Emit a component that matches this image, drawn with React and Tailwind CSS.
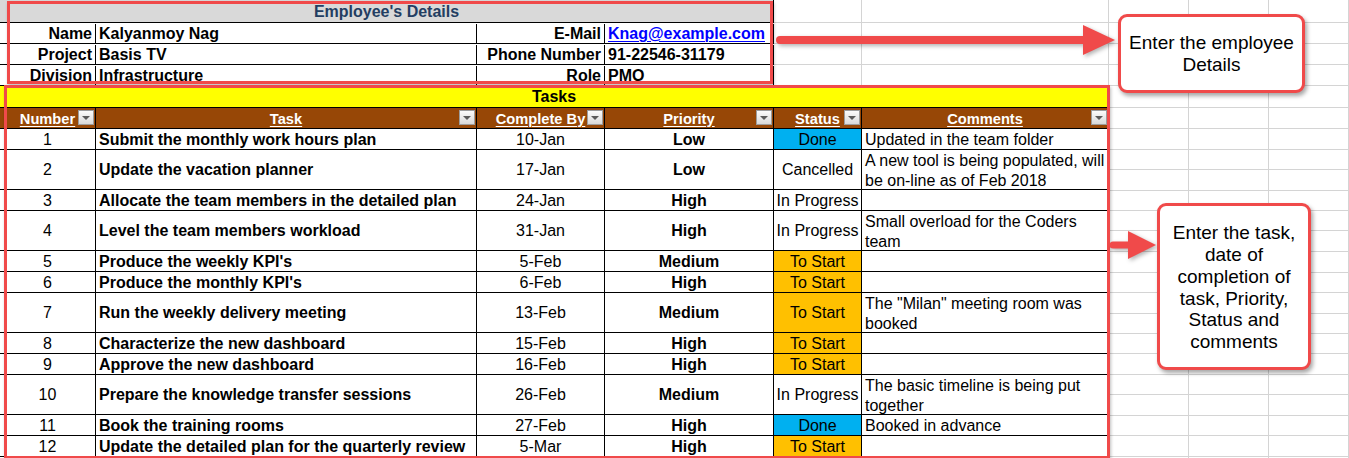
import React from "react";

const RED = "#f04a4a";

const employee = [
  ["Name", "Kalyanmoy Nag", "E-Mail", "Knag@example.com"],
  ["Project", "Basis TV", "Phone Number", "91-22546-31179"],
  ["Division", "Infrastructure", "Role", "PMO"],
];

const tasks = [
  { n: 1, t: "Submit the monthly work hours plan", d: "10-Jan", p: "Low", s: "Done", c: ["Updated in the team folder"], h: 21 },
  { n: 2, t: "Update the vacation planner", d: "17-Jan", p: "Low", s: "Cancelled", c: ["A new tool is being populated, will", "be on-line as of Feb 2018"], h: 40 },
  { n: 3, t: "Allocate the team members in the detailed plan", d: "24-Jan", p: "High", s: "In Progress", c: [], h: 21 },
  { n: 4, t: "Level the team members workload", d: "31-Jan", p: "High", s: "In Progress", c: ["Small overload for the Coders", "team"], h: 40 },
  { n: 5, t: "Produce the weekly KPI's", d: "5-Feb", p: "Medium", s: "To Start", c: [], h: 21 },
  { n: 6, t: "Produce the monthly KPI's", d: "6-Feb", p: "High", s: "To Start", c: [], h: 21 },
  { n: 7, t: "Run the weekly delivery meeting", d: "13-Feb", p: "Medium", s: "To Start", c: ['The "Milan" meeting room was', "booked"], h: 40 },
  { n: 8, t: "Characterize the new dashboard", d: "15-Feb", p: "High", s: "To Start", c: [], h: 21 },
  { n: 9, t: "Approve the new dashboard", d: "16-Feb", p: "High", s: "To Start", c: [], h: 21 },
  { n: 10, t: "Prepare the knowledge transfer sessions", d: "26-Feb", p: "Medium", s: "In Progress", c: ["The basic timeline is being put", "together"], h: 40 },
  { n: 11, t: "Book the training rooms", d: "27-Feb", p: "High", s: "Done", c: ["Booked in advance"], h: 21 },
  { n: 12, t: "Update the detailed plan for the quarterly review", d: "5-Mar", p: "High", s: "To Start", c: [], h: 21 },
];

const H = { 20: "h-[20px]", 21: "h-[21px]", 22: "h-[22px]", 23: "h-[23px]", 40: "h-[40px]" };

const statusBg = {
  Done: "bg-[#00b0f0]",
  "To Start": "bg-[#ffc000]",
  Cancelled: "bg-white",
  "In Progress": "bg-white",
};

const rightRows = [23, 21, 21, 21, 22, 21, 21, 20, 21, 20, 20, 21, 21, 20, 21, 20, 20, 21, 20, 21, 20, 21, 20];

function FilterBtn() {
  return (
    <span className="absolute right-[1px] top-[2px] w-[16px] h-[15px] border border-[#9c9c9c] bg-linear-to-b from-[#fbfbfb] to-[#d9d9d9] flex items-center justify-center">
      <span className="w-0 h-0 border-l-[4px] border-r-[4px] border-t-[4px] border-l-transparent border-r-transparent border-t-[#5a5a5a]" />
    </span>
  );
}

function HeadCell({ w, label }) {
  return (
    <div className={`relative ${w} border-r border-black flex items-center justify-center pt-[1px]`}>
      <span className="text-white font-bold text-[14.67px] underline decoration-1 underline-offset-2">{label}</span>
      <FilterBtn />
    </div>
  );
}

export default function App() {
  return (
    <div className="relative w-[1349px] h-[458px] overflow-hidden bg-white text-black font-['Liberation_Sans',Arial,sans-serif] text-[16px] leading-[20px]">
      <div className="flex">
        {/* sheet */}
        <div className="w-[1109px] shrink-0 flex flex-col">
          <div className="flex">
            {/* employee details */}
            <div className="w-[774px] shrink-0 flex flex-col">
              <div className="h-[23px] bg-[#d9d9d9] border-b border-r border-black flex items-center justify-center pt-[1px] font-bold text-[#233e62]">
                Employee's Details
              </div>
              {employee.map((r, i) => (
                <div key={i} className="flex h-[21px] border-b border-black pt-[1px]">
                  <div className="w-[96px] border-r border-black flex items-center justify-end pr-[3px] font-bold whitespace-nowrap">{r[0]}</div>
                  <div className="w-[381px] border-r border-black flex items-center pl-[3px] font-bold whitespace-nowrap">{r[1]}</div>
                  <div className="w-[128px] border-r border-black flex items-center justify-end pr-[3px] font-bold whitespace-nowrap">{r[2]}</div>
                  <div className="w-[169px] border-r border-black flex items-center pl-[3px] font-bold whitespace-nowrap">
                    {i === 0 ? <span className="text-[#0000ff] underline decoration-1 underline-offset-2">{r[3]}</span> : r[3]}
                  </div>
                </div>
              ))}
            </div>
            {/* empty gridded cells */}
            <div className="flex-1 flex flex-col">
              {[23, 21, 21, 21].map((h, i) => (
                <div key={i} className={`flex ${H[h]} border-b ${i === 3 ? "border-black" : "border-[#d4d4d4]"}`}>
                  <div className="w-[88px] border-r border-[#d4d4d4]" />
                  <div className="w-[247px] border-r border-[#d4d4d4]" />
                </div>
              ))}
            </div>
          </div>

          {/* tasks table */}
          <div className="h-[22px] bg-[#ffff00] border-b border-r border-black flex items-center justify-center pt-[1px] font-bold">Tasks</div>
          <div className="flex h-[21px] bg-[#974706] border-b border-black">
            <HeadCell w="w-[96px]" label="Number" />
            <HeadCell w="w-[381px]" label="Task" />
            <HeadCell w="w-[128px]" label="Complete By" />
            <HeadCell w="w-[169px]" label="Priority" />
            <HeadCell w="w-[88px]" label="Status" />
            <HeadCell w="w-[247px]" label="Comments" />
          </div>
          {tasks.map((r) => (
            <div key={r.n} className={`flex ${H[r.h]} border-b border-black`}>
              <div className="w-[96px] border-r border-black flex items-center justify-center pt-[1px]">{r.n}</div>
              <div className="w-[381px] border-r border-black flex items-center pl-[3px] pt-[1px] font-bold whitespace-nowrap">{r.t}</div>
              <div className="w-[128px] border-r border-black flex items-center justify-center pt-[1px]">{r.d}</div>
              <div className="w-[169px] border-r border-black flex items-center justify-center pt-[1px] font-bold">{r.p}</div>
              <div className={`w-[88px] border-r border-black flex items-center justify-center pt-[1px] whitespace-nowrap ${statusBg[r.s]}`}>{r.s}</div>
              <div className="w-[247px] border-r border-black flex flex-col justify-center pl-[3px] pt-[2px] whitespace-nowrap overflow-hidden">
                {r.c.map((line, k) => (
                  <span key={k}>{line}</span>
                ))}
              </div>
            </div>
          ))}
        </div>

        {/* right gridded area */}
        <div className="flex-1 flex flex-col">
          {rightRows.map((h, i) => (
            <div key={i} className={`flex ${H[h]} shrink-0 border-b border-[#d4d4d4]`}>
              <div className="w-[80px] border-r border-[#d4d4d4]" />
              <div className="w-[80px] border-r border-[#d4d4d4]" />
              <div className="w-[80px] border-r border-[#d4d4d4]" />
            </div>
          ))}
        </div>
      </div>

      {/* annotation boxes */}
      <div className="absolute left-[7px] top-[1px] w-[766px] h-[83px] border-[3px] border-[#f04a4a] shadow-[1px_2px_3px_rgba(0,0,0,0.25)] pointer-events-none" />
      <div className="absolute left-[4px] top-[85px] w-[1106px] h-[374px] border-[3px] border-[#f04a4a] shadow-[1px_2px_3px_rgba(0,0,0,0.25)] pointer-events-none" />

      {/* arrows */}
      <svg
        className="absolute left-0 top-0 w-[1349px] h-[458px] pointer-events-none drop-shadow-[2px_2px_2px_rgba(0,0,0,0.3)]"
        viewBox="0 0 1349 458"
      >
        <line x1="780" y1="40" x2="1088" y2="40" stroke={RED} strokeWidth="8" strokeLinecap="round" />
        <polygon points="1083,25 1115,40 1083,55" fill={RED} />
        <line x1="1113" y1="245" x2="1132" y2="245" stroke={RED} strokeWidth="7" strokeLinecap="round" />
        <polygon points="1128,231 1156,245 1128,259" fill={RED} />
      </svg>

      {/* callouts */}
      <div className="absolute left-[1118px] top-[14px] w-[187px] h-[79px] bg-white border-[3px] border-[#f04a4a] rounded-[9px] shadow-[2px_3px_4px_rgba(0,0,0,0.35)] flex items-center justify-center text-center text-[19px] leading-[22px]">
        <span>
          Enter the employee
          <br />
          Details
        </span>
      </div>
      <div className="absolute left-[1157px] top-[203px] w-[154px] h-[167px] bg-white border-[3px] border-[#f04a4a] rounded-[9px] shadow-[2px_3px_4px_rgba(0,0,0,0.35)] flex items-center justify-center text-center text-[19px] leading-[21.7px] pt-[2px]">
        <span>
          Enter the task,
          <br />
          date of
          <br />
          completion of
          <br />
          task, Priority,
          <br />
          Status and
          <br />
          comments
        </span>
      </div>
    </div>
  );
}
